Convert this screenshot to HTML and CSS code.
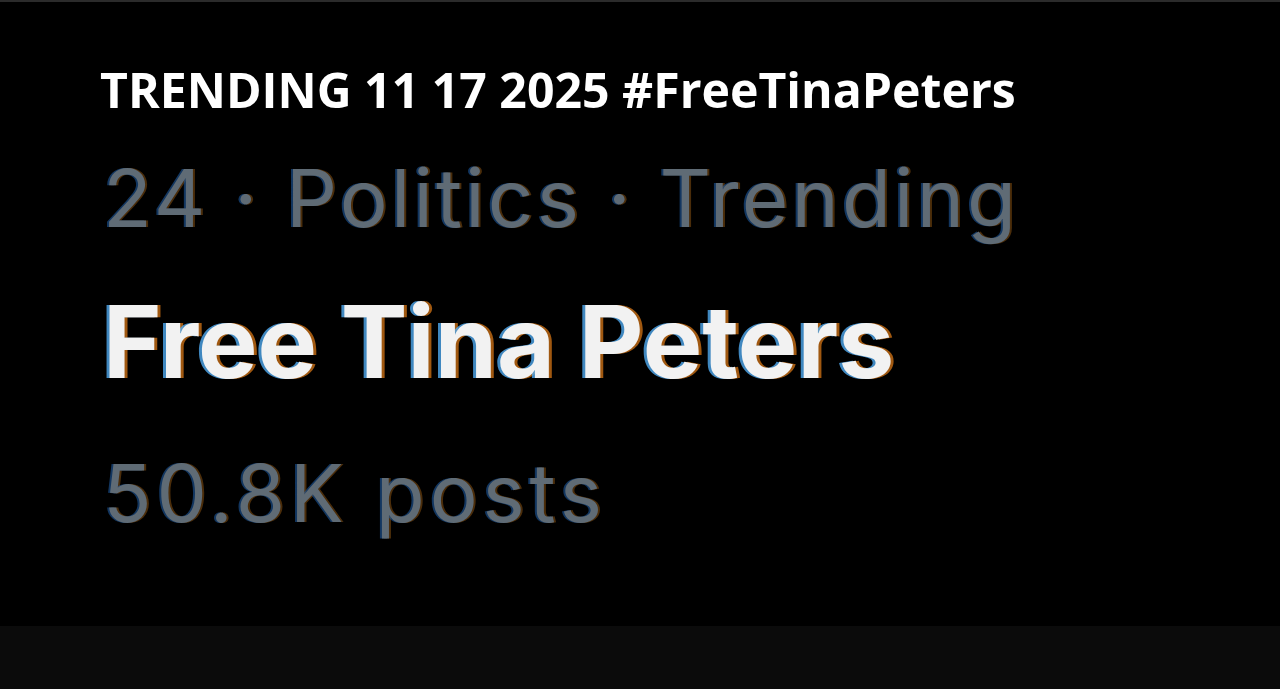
FILE: index.html
```html
<!DOCTYPE html>
<html>
<head>
<meta charset="utf-8">
<link rel="stylesheet" href="styles.css">
</head>
<body>
<div class="page">
  <main class="main">
    <h1 class="title">TRENDING 11 17 2025 #FreeTinaPeters</h1>
    <section class="trend">
      <div class="meta">24 · Politics · Trending</div>
      <div class="name">Free Tina Peters</div>
      <div class="count">50.8K posts</div>
    </section>
  </main>
  <footer class="footer"></footer>
</div>
</body>
</html>
```
FILE: styles.css
```css
html, body {
  margin: 0;
  padding: 0;
  background: #000;
}
.page {
  width: 1280px;
  height: 689px;
  display: flex;
  flex-direction: column;
  border-top: 2px solid #2b2b2b;
  box-sizing: border-box;
  overflow: hidden;
}
.main {
  flex: 1;
  padding: 0 0 0 100px;
}
.footer {
  height: 63px;
  background: #0b0b0b;
}
.title {
  margin: 0;
  padding-top: 57px;
  font-family: "Open Sans", sans-serif;
  font-weight: 700;
  font-size: 48.2px;
  line-height: 60px;
  color: #fff;
}
.trend {
  padding-left: 3px;
  font-family: "Inter", sans-serif;
}
.meta {
  margin-top: 29px;
  font-size: 80px;
  line-height: 100px;
  letter-spacing: 3.15px;
  color: #5f6b75;
  text-shadow: -2px 0 rgba(30,90,160,0.6), 2px 0 rgba(150,90,20,0.5);
}
.name {
  margin-top: 39px;
  font-size: 100px;
  font-weight: 700;
  line-height: 110px;
  color: #f2f2f2;
  text-shadow: -3px 0 rgba(80,170,240,0.8), 3px 0 rgba(200,110,20,0.8);
}
.count {
  margin-top: 46px;
  font-size: 80px;
  line-height: 100px;
  letter-spacing: 4.8px;
  color: #5f6b75;
  text-shadow: -2px 0 rgba(30,90,160,0.6), 2px 0 rgba(150,90,20,0.5);
}
```
